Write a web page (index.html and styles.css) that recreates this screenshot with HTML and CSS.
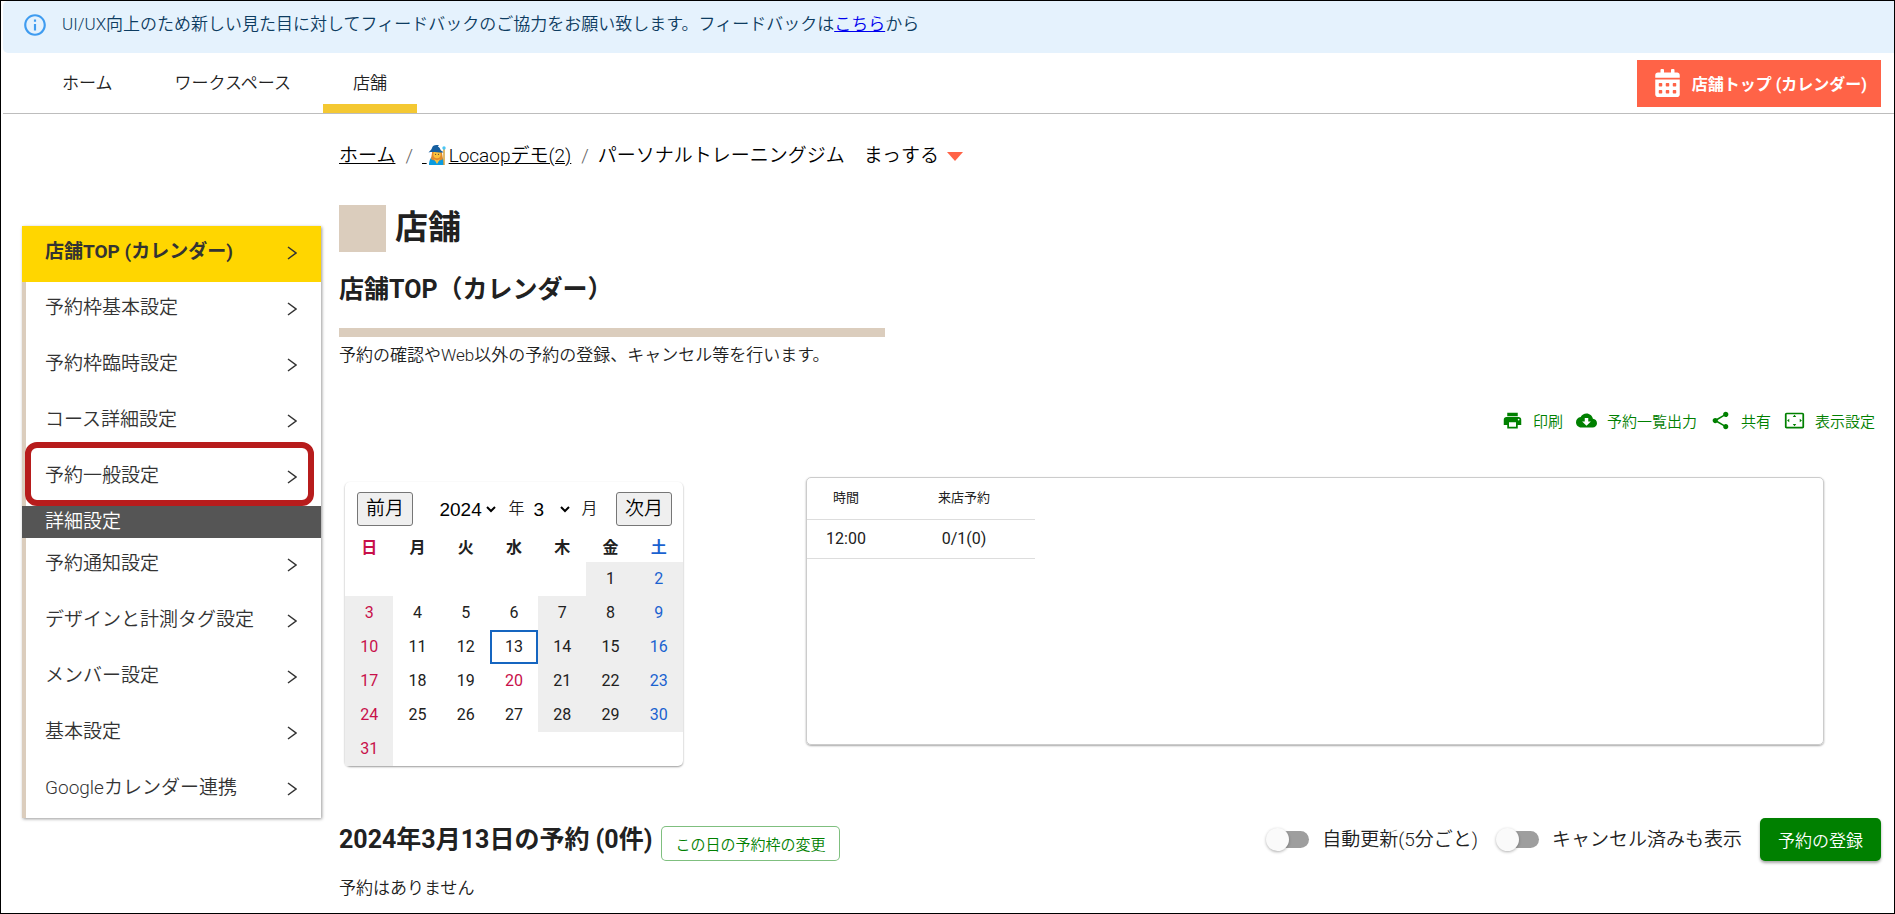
FILE: index.html
```html
<!DOCTYPE html>
<html lang="ja">
<head>
<meta charset="utf-8">
<title>店舗TOP（カレンダー）</title>
<link rel="stylesheet" href="styles.css">
</head>
<body>
<div class="page">
  <div class="notice" role="status">
    <svg class="notice-icon" viewBox="0 0 24 24" aria-hidden="true"><path d="M11 7h2v2h-2zm0 4h2v6h-2zm1-9C6.480 2 2 6.480 2 12s4.480 10 10 10 10-4.480 10-10S17.520 2 12 2zm0 18c-4.410 0-8-3.590-8-8s3.590-8 8-8 8 3.590 8 8-3.590 8-8 8z"/></svg>
    <p>UI/UX向上のため新しい見た目に対してフィードバックのご協力をお願い致します。フィードバックは<a href="#">こちら</a>から</p>
  </div>

  <header class="header">
    <nav class="tabs">
      <a class="tab" href="#">ホーム</a>
      <a class="tab" href="#">ワークスペース</a>
      <a class="tab tab-active" href="#">店舗</a>
    </nav>
    <button class="top-button" type="button">
      <svg class="top-button-icon" viewBox="0 0 448 512" aria-hidden="true"><path d="M0 464c0 26.500 21.500 48 48 48h352c26.500 0 48-21.500 48-48V192H0v272zm320-196c0-6.600 5.400-12 12-12h40c6.600 0 12 5.400 12 12v40c0 6.600-5.400 12-12 12h-40c-6.600 0-12-5.400-12-12v-40zm0 128c0-6.600 5.400-12 12-12h40c6.600 0 12 5.400 12 12v40c0 6.600-5.400 12-12 12h-40c-6.600 0-12-5.400-12-12v-40zM192 268c0-6.600 5.400-12 12-12h40c6.600 0 12 5.400 12 12v40c0 6.600-5.400 12-12 12h-40c-6.600 0-12-5.400-12-12v-40zm0 128c0-6.600 5.400-12 12-12h40c6.600 0 12 5.400 12 12v40c0 6.600-5.400 12-12 12h-40c-6.600 0-12-5.400-12-12v-40zM64 268c0-6.600 5.400-12 12-12h40c6.600 0 12 5.400 12 12v40c0 6.600-5.400 12-12 12H76c-6.600 0-12-5.400-12-12v-40zm0 128c0-6.600 5.400-12 12-12h40c6.600 0 12 5.400 12 12v40c0 6.600-5.400 12-12 12H76c-6.600 0-12-5.400-12-12v-40zM400 64h-48V16c0-8.800-7.200-16-16-16h-32c-8.800 0-16 7.200-16 16v48H160V16c0-8.800-7.200-16-16-16h-32c-8.800 0-16 7.200-16 16v48H48C21.500 64 0 85.500 0 112v48h448v-48c0-26.500-21.500-48-48-48z"/></svg>
      店舗トップ (カレンダー)
    </button>
  </header>

  <div class="layout">
    <aside class="sidebar">
      <a class="side-item side-active" href="#">店舗TOP (カレンダー)<svg class="chevron" viewBox="0 0 10 14" aria-hidden="true"><path d="M1 1l8 6-8 6"/></svg></a>
      <a class="side-item" href="#">予約枠基本設定<svg class="chevron" viewBox="0 0 10 14" aria-hidden="true"><path d="M1 1l8 6-8 6"/></svg></a>
      <a class="side-item" href="#">予約枠臨時設定<svg class="chevron" viewBox="0 0 10 14" aria-hidden="true"><path d="M1 1l8 6-8 6"/></svg></a>
      <a class="side-item" href="#">コース詳細設定<svg class="chevron" viewBox="0 0 10 14" aria-hidden="true"><path d="M1 1l8 6-8 6"/></svg></a>
      <a class="side-item side-marked" href="#">予約一般設定<svg class="chevron" viewBox="0 0 10 14" aria-hidden="true"><path d="M1 1l8 6-8 6"/></svg></a>
      <div class="side-heading">詳細設定</div>
      <a class="side-item" href="#">予約通知設定<svg class="chevron" viewBox="0 0 10 14" aria-hidden="true"><path d="M1 1l8 6-8 6"/></svg></a>
      <a class="side-item" href="#">デザインと計測タグ設定<svg class="chevron" viewBox="0 0 10 14" aria-hidden="true"><path d="M1 1l8 6-8 6"/></svg></a>
      <a class="side-item" href="#">メンバー設定<svg class="chevron" viewBox="0 0 10 14" aria-hidden="true"><path d="M1 1l8 6-8 6"/></svg></a>
      <a class="side-item" href="#">基本設定<svg class="chevron" viewBox="0 0 10 14" aria-hidden="true"><path d="M1 1l8 6-8 6"/></svg></a>
      <a class="side-item" href="#">Googleカレンダー連携<svg class="chevron" viewBox="0 0 10 14" aria-hidden="true"><path d="M1 1l8 6-8 6"/></svg></a>
    </aside>

    <main class="content">
      <nav class="crumbs">
        <a href="#">ホーム</a>
        <span class="slash">/</span>
        <a href="#">&nbsp;<svg class="mage" viewBox="0 0 19 20" aria-hidden="true"><path d="M2 20c0-5 2-8 4-9h7c3 1 4 4 4 9z" fill="#0a9be0"/><path d="M5 8c0-3 2-4 5-4s5 1 5 4l1 6c-2 2-10 2-12 0z" fill="#e08a2c"/><circle cx="10" cy="9.500" r="3.700" fill="#fbc23c"/><path d="M7 14c2 1.500 4 1.500 6 0l-3 5z" fill="#fbc23c"/><path d="M1.500 7.500C3 5.500 4.500 5 5 3 5.500.5 8-.5 12 .3L10.800 1.500c2 1 2.500 2.500 3 4l3 1.700C13 8.200 6 6 1.500 7.500z" fill="#155fa0"/><circle cx="8.600" cy="9.300" r=".6" fill="#543"/><circle cx="11.500" cy="9.300" r=".6" fill="#543"/><path d="M17 4v16" stroke="#d7a23a" stroke-width="1.500"/><circle cx="17" cy="3" r="1.700" fill="#49c6f5"/></svg>Locaopデモ(2)</a>
        <span class="slash">/</span>
        <span>パーソナルトレーニングジム　まっする</span>
        <svg class="caret" viewBox="0 0 16 9" aria-hidden="true"><path d="M0 0h16L8 9z"/></svg>
      </nav>

      <h1 class="title">店舗</h1>
      <h2 class="subtitle">店舗TOP（カレンダー）</h2>
      <div class="rule"></div>
      <p class="lead">予約の確認やWeb以外の予約の登録、キャンセル等を行います。</p>

      <div class="tools">
        <button class="tool" type="button"><svg viewBox="0 0 24 24" aria-hidden="true"><path d="M19 8H5c-1.660 0-3 1.340-3 3v6h4v4h12v-4h4v-6c0-1.660-1.340-3-3-3zm-3 11H8v-5h8v5zm3-7c-.55 0-1-.45-1-1s.45-1 1-1 1 .45 1 1-.45 1-1 1zm-1-9H6v4h12V3z"/></svg>印刷</button>
        <button class="tool" type="button"><svg viewBox="0 0 24 24" aria-hidden="true"><path d="M19.350 10.040C18.670 6.590 15.640 4 12 4 9.110 4 6.600 5.640 5.350 8.040 2.340 8.360 0 10.910 0 14c0 3.310 2.690 6 6 6h13c2.760 0 5-2.240 5-5 0-2.640-2.050-4.780-4.650-4.960zM17 13l-5 5-5-5h3V9h4v4h3z"/></svg>予約一覧出力</button>
        <button class="tool" type="button"><svg viewBox="0 0 24 24" aria-hidden="true"><path d="M18 16.080c-.76 0-1.440.3-1.960.77L8.910 12.700c.05-.23.09-.46.09-.7s-.04-.47-.09-.7l7.050-4.110c.54.5 1.250.81 2.040.81 1.660 0 3-1.340 3-3s-1.340-3-3-3-3 1.340-3 3c0 .24.04.47.09.7L8.040 9.810C7.500 9.310 6.790 9 6 9c-1.660 0-3 1.340-3 3s1.340 3 3 3c.79 0 1.500-.31 2.040-.81l7.120 4.160c-.05.21-.08.43-.08.65 0 1.610 1.310 2.920 2.920 2.920s2.920-1.310 2.920-2.920-1.310-2.920-2.920-2.920z"/></svg>共有</button>
        <button class="tool" type="button"><svg viewBox="0 0 24 24" aria-hidden="true"><path d="M12.010 5.500L10 8h4l-1.990-2.500zM18 10v4l2.500-1.990L18 10zM6 10l-2.500 2.010L6 14v-4zm8 6h-4l2.010 2.500L14 16zm7-13H3c-1.100 0-2 .9-2 2v14c0 1.100.9 2 2 2h18c1.100 0 2-.9 2-2V5c0-1.100-.9-2-2-2zm0 16.010H3V4.990h18v14.020z"/></svg>表示設定</button>
      </div>

      <div class="panels">
        <section class="calendar">
          <div class="cal-nav">
            <button class="cal-button" type="button">前月</button>
            <div class="cal-pick">
              <select class="cal-year" aria-label="年"><option>2024</option></select>
              <span>年</span>
              <select class="cal-month" aria-label="月"><option>3</option></select>
              <span>月</span>
            </div>
            <button class="cal-button" type="button">次月</button>
          </div>
          <table class="cal-table">
            <thead><tr><th class="sun">日</th><th>月</th><th>火</th><th>水</th><th>木</th><th>金</th><th class="sat">土</th></tr></thead>
            <tbody>
              <tr><td></td><td></td><td></td><td></td><td></td><td class="off">1</td><td class="off sat">2</td></tr>
              <tr><td class="off sun">3</td><td>4</td><td>5</td><td>6</td><td class="off">7</td><td class="off">8</td><td class="off sat">9</td></tr>
              <tr><td class="off sun">10</td><td>11</td><td>12</td><td class="today">13</td><td class="off">14</td><td class="off">15</td><td class="off sat">16</td></tr>
              <tr><td class="off sun">17</td><td>18</td><td>19</td><td class="sun">20</td><td class="off">21</td><td class="off">22</td><td class="off sat">23</td></tr>
              <tr><td class="off sun">24</td><td>25</td><td>26</td><td>27</td><td class="off">28</td><td class="off">29</td><td class="off sat">30</td></tr>
              <tr><td class="off sun">31</td><td></td><td></td><td></td><td></td><td></td><td></td></tr>
            </tbody>
          </table>
        </section>

        <section class="slots">
          <table class="slot-table">
            <thead><tr><th>時間</th><th>来店予約</th></tr></thead>
            <tbody><tr><td>12:00</td><td>0/1(0)</td></tr></tbody>
          </table>
        </section>
      </div>

      <div class="day-bar">
        <h2 class="day-title">2024年3月13日の予約 (0件)</h2>
        <button class="day-edit" type="button">この日の予約枠の変更</button>
        <div class="day-actions">
          <label class="switch"><input type="checkbox" role="switch">自動更新(5分ごと)</label>
          <label class="switch"><input type="checkbox" role="switch">キャンセル済みも表示</label>
          <button class="add-button" type="button">予約の登録</button>
        </div>
      </div>
      <p class="empty">予約はありません</p>
    </main>
  </div>
</div>
</body>
</html>
```

FILE: styles.css
```css
* {
  box-sizing: border-box;
}

body {
  margin: 0;
  background: #fff;
  color: #212121;
  font-family: Roboto, "Noto Sans CJK JP", sans-serif;
  font-size: 17px;
  font-weight: 350;
  line-height: 24px;
}

button,
select {
  font-family: inherit;
  font-weight: inherit;
}

button {
  margin: 0;
  padding: 0;
  cursor: pointer;
}

h1,
h2,
p {
  margin: 0;
}

.page {
  min-height: 100vh;
  border: 1px solid #000;
}

/* notice */

.notice {
  display: flex;
  align-items: flex-start;
  gap: 14px;
  min-height: 52px;
  margin-left: 2px;
  padding: 11px 19px;
  border-radius: 5px 0 0 5px;
  background: #e5f2fd;
  color: #0d3c61;
}

.notice-icon {
  width: 26px;
  height: 26px;
  fill: #3f9cf0;
}

.notice p {
  line-height: 24px;
}

.notice a {
  color: #0000ee;
}

/* header */

.header {
  display: flex;
  align-items: center;
  justify-content: space-between;
  margin-left: 2px;
  padding: 0 13px 0 29px;
  border-bottom: 1px solid #bdbdbd;
}

.tabs {
  display: flex;
  gap: 2px;
}

.tab {
  height: 60px;
  padding: 18px 30px 0;
  border-bottom: 9px solid transparent;
  color: #212121;
  text-decoration: none;
}

.tab-active {
  border-bottom-color: #f4c832;
}

.top-button {
  display: flex;
  align-items: center;
  gap: 12px;
  height: 47px;
  padding: 0 14px 0 18px;
  border: 0;
  background: #ff6347;
  color: #fff;
  font-size: 16px;
  font-weight: 700;
}

.top-button-icon {
  width: 25px;
  height: 28px;
  fill: #fff;
}

/* layout */

.layout {
  display: grid;
  grid-template-columns: 299px 1fr;
  gap: 18px;
  align-items: start;
  padding: 0 13px 0 21px;
}

.sidebar {
  margin-top: 112px;
  border-left: 4px solid #dbcdbd;
  box-shadow: 1px 1px 3px rgba(0, 0, 0, 0.4);
  font-size: 19px;
}

.side-item {
  display: flex;
  align-items: center;
  justify-content: space-between;
  height: 56px;
  padding: 0 24px 4px 19px;
  color: #333;
  text-decoration: none;
}

.side-active {
  margin-left: -4px;
  padding-left: 23px;
  background: #ffd600;
  font-weight: 700;
}

.side-marked {
  position: relative;
}

.side-marked::after {
  content: "";
  position: absolute;
  inset: -8px 7px 0 -1px;
  border: 6px solid #b71c1c;
  border-radius: 12px;
}

.side-heading {
  height: 32px;
  margin-left: -4px;
  padding-left: 23px;
  background: #555;
  color: #fff;
  line-height: 32px;
}

.chevron {
  width: 10px;
  height: 14px;
  margin-top: 2px;
  fill: none;
  stroke: #333;
  stroke-width: 1.5;
}

/* content */

.content {
  padding-top: 28px;
}

.crumbs {
  display: flex;
  align-items: center;
  color: #000;
  font-size: 19px;
  line-height: 28px;
}

.crumbs a {
  color: #000;
}

.slash {
  margin: 0 9px 0 10px;
  color: #666;
}

.mage {
  width: 19px;
  height: 20px;
  margin-right: 3px;
  vertical-align: -3px;
}

.caret {
  width: 16px;
  height: 9px;
  margin-left: 8px;
  fill: #ff6347;
}

.title {
  display: flex;
  align-items: flex-start;
  gap: 9px;
  margin-top: 35px;
  font-size: 33px;
  font-weight: 700;
  line-height: 45px;
}

.title::before {
  content: "";
  width: 47px;
  height: 47px;
  background: #dbcdbd;
}

.subtitle {
  margin-top: 20px;
  font-size: 25px;
  font-weight: 700;
  line-height: 36px;
}

.rule {
  width: 546px;
  max-width: 100%;
  height: 9px;
  margin-top: 20px;
  background: #dbcdbd;
}

.lead {
  margin-top: 6px;
}

.tools {
  display: flex;
  justify-content: flex-end;
  gap: 13px;
  margin-top: 37px;
  padding-right: 6px;
}

.tool {
  display: flex;
  align-items: center;
  gap: 10px;
  height: 32px;
  border: 0;
  background: none;
  color: #008000;
  font-size: 15px;
}

.tool svg {
  width: 21px;
  height: 21px;
  fill: #008000;
}

.panels {
  display: flex;
  align-items: flex-start;
  gap: 123px;
  margin-top: 41px;
  padding: 0 57px 0 6px;
}

.calendar {
  width: 338px;
  margin-top: 5px;
  border-radius: 5px;
  box-shadow: 0 1px 2px rgba(0, 0, 0, 0.4);
}

.cal-nav {
  display: flex;
  align-items: center;
  justify-content: space-between;
  padding: 10px 11px 8px 12px;
}

.cal-button {
  width: 56px;
  height: 34px;
  border: 1px solid #767676;
  border-radius: 3px;
  background: #efefef;
  color: #000;
  font-size: 19px;
  line-height: 28px;
}

.cal-pick {
  display: flex;
  align-items: center;
  gap: 5px;
  padding-left: 4px;
  font-size: 16px;
}

.cal-pick select {
  margin-right: 4px;
  border: 0;
  background-color: transparent;
  color: #000;
  font-family: "Liberation Sans", sans-serif;
  font-size: 19px;
  font-weight: 400;
}

.cal-year {
  width: 64px;
}

.cal-month {
  width: 43px;
}

.cal-table {
  width: 100%;
  border-collapse: collapse;
  table-layout: fixed;
  font-size: 16px;
  font-weight: 400;
  text-align: center;
}

.cal-table th {
  height: 28px;
  padding: 0;
  font-weight: 700;
}

.cal-table td {
  height: 34px;
  padding: 0;
}

.cal-table .off {
  background: #eee;
}

.cal-table .sun {
  color: #c8104a;
}

.cal-table .sat {
  color: #1a62d0;
}

.cal-table .today {
  box-shadow: inset 0 0 0 2px #1565c0;
}

.slots {
  flex: 1;
  min-height: 268px;
  border: 1px solid #ccc;
  border-radius: 5px;
  box-shadow: 0 1px 2px rgba(0, 0, 0, 0.35);
}

.slot-table {
  width: 228px;
  border-collapse: collapse;
  table-layout: fixed;
  font-size: 16px;
  font-weight: 400;
  text-align: center;
}

.slot-table th,
.slot-table td {
  height: 39px;
  padding: 0;
  border-bottom: 1px solid #ddd;
}

.slot-table th {
  height: 41px;
  font-size: 13px;
  font-weight: 400;
}

.slot-table th:first-child {
  width: 78px;
}

.slot-table th:last-child,
.slot-table td:last-child {
  padding-left: 8px;
}

.day-bar {
  display: flex;
  align-items: center;
  margin-top: 52px;
}

.day-title {
  font-size: 25px;
  font-weight: 700;
  line-height: 36px;
}

.day-edit {
  height: 35px;
  margin: 8px 0 0 9px;
  padding: 0 13px;
  border: 1px solid rgba(0, 128, 0, 0.5);
  border-radius: 5px;
  background: #fff;
  color: #008000;
  font-size: 15px;
}

.day-actions {
  display: flex;
  align-items: center;
  gap: 18px;
  margin-left: auto;
}

.switch {
  display: flex;
  align-items: center;
  gap: 13px;
  font-size: 19px;
}

.switch input {
  appearance: none;
  display: flex;
  align-items: center;
  width: 40px;
  height: 17px;
  margin: 0 0 0 3px;
  border-radius: 9px;
  background: #9e9e9e;
}

.switch input::before {
  content: "";
  width: 23px;
  height: 23px;
  margin-left: -3px;
  border-radius: 50%;
  background: #fafafa;
  box-shadow: 0 1px 3px rgba(0, 0, 0, 0.3);
}

.switch input:checked::before {
  margin-left: 20px;
}

.add-button {
  height: 43px;
  padding: 0 18px;
  border: 0;
  border-radius: 5px;
  background: #008000;
  box-shadow: 0 2px 3px rgba(0, 0, 0, 0.35);
  color: #fff;
  font-size: 17px;
  font-weight: 350;
}

.empty {
  margin-top: 15px;
}
```
